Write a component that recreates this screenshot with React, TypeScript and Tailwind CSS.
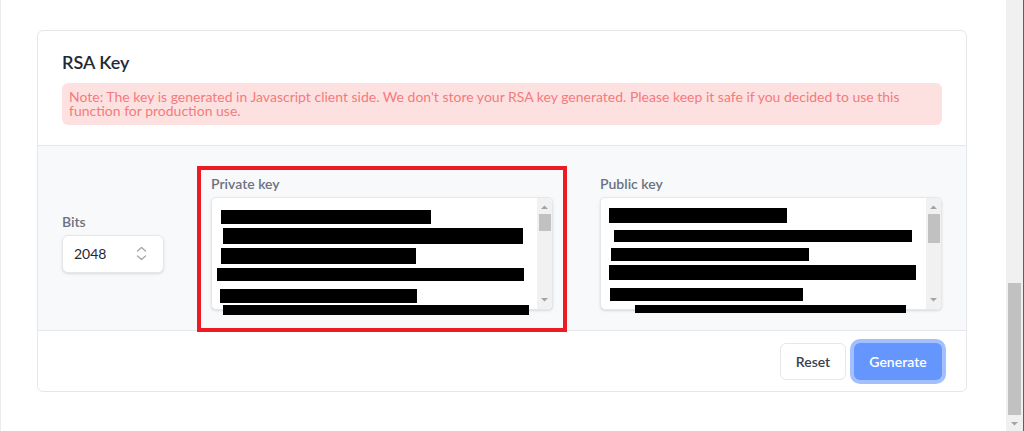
import React from "react";

type Bar = { l: number; t: number; w: number; h: number };

const privateBars: Bar[] = [
  { l: 9, t: 12, w: 210, h: 14 },
  { l: 11, t: 30, w: 300, h: 16 },
  { l: 9, t: 50, w: 195, h: 16 },
  { l: 5, t: 70, w: 307, h: 13 },
  { l: 8, t: 91, w: 197, h: 14 },
  { l: 11, t: 107, w: 306, h: 10 },
];

const publicBars: Bar[] = [
  { l: 8, t: 10, w: 178, h: 15 },
  { l: 13, t: 32, w: 298, h: 12 },
  { l: 10, t: 50, w: 198, h: 13 },
  { l: 8, t: 67, w: 307, h: 15 },
  { l: 9, t: 90, w: 193, h: 13 },
  { l: 34, t: 107, w: 271, h: 8 },
];

function FakeTextarea({ bars, thumbH }: { bars: Bar[]; thumbH: number }) {
  return (
    <div className="relative h-[113px] rounded-[5px] border border-[#e5e7eb] bg-white shadow-sm">
      <div className="absolute right-0 top-0 bottom-0 flex w-[15px] flex-col items-center rounded-r-[5px] bg-[#f1f1f1]">
        <svg width="9" height="6" viewBox="0 0 9 6" className="mt-[6px]">
          <path d="M4.5 1.5 L8 5 L1 5 Z" fill="#a3a3a3" />
        </svg>
        <div className="mt-[4px] w-[12px] bg-[#c1c1c1]" style={{ height: thumbH }} />
        <div className="flex-1" />
        <svg width="9" height="6" viewBox="0 0 9 6" className="mb-[6px]">
          <path d="M1 1 L8 1 L4.5 4.5 Z" fill="#a3a3a3" />
        </svg>
      </div>
      {bars.map((b, i) => (
        <div
          key={i}
          className="absolute bg-black"
          style={{ left: b.l, top: b.t, width: b.w, height: b.h }}
        />
      ))}
    </div>
  );
}

export default function App() {
  return (
    <div className="relative h-[431px] w-[1024px] overflow-hidden bg-white font-['Lato',sans-serif]">
      <div className="flex h-full">
        <div className="w-[1006px] border-l border-[#ececec] pl-[36px] pr-[39px] pt-[30px]">
          <div className="overflow-hidden rounded-md border border-[#e5e7eb] bg-white">
            {/* Header */}
            <div className="px-6 pb-[20px] pt-[17px]">
              <h2 className="text-[18px] font-semibold leading-[28px] text-[#1f2937]">RSA Key</h2>
              <div className="mt-[7px] rounded-md bg-[#fde1e1] px-[7px] py-[7px] text-[14px] leading-[14px] text-[#f47b7b]">
                Note: The key is generated in Javascript client side. We don't store your RSA key generated. Please keep it safe if you decided to use this function for production use.
              </div>
            </div>
            {/* Body */}
            <div className="grid grid-cols-[102px_1fr_1fr] items-center gap-x-[47px] border-y border-[#e5e7eb] bg-[#f8f9fb] px-6 pb-[20px] pt-[28px]">
              <div>
                <div className="mb-[3px] text-[14px] font-semibold leading-[20px] text-[#6b7280]">Bits</div>
                <div className="flex h-[38px] items-center justify-between rounded-md border border-[#e5e7eb] bg-white pl-[11px] pr-[16px] shadow-sm">
                  <span className="text-[14px] text-[#1f2937]">2048</span>
                  <svg width="11" height="15" viewBox="0 0 11 15" fill="none" stroke="#a3a8b3" strokeWidth="1.4" strokeLinecap="round" strokeLinejoin="round">
                    <path d="M1.5 5 L5.5 1.5 L9.5 5" />
                    <path d="M1.5 10 L5.5 13.5 L9.5 10" />
                  </svg>
                </div>
              </div>
              <div>
                <div className="mb-[3px] text-[14px] font-semibold leading-[20px] text-[#6b7280]">Private key</div>
                <FakeTextarea bars={privateBars} thumbH={17} />
              </div>
              <div>
                <div className="mb-[3px] text-[14px] font-semibold leading-[20px] text-[#6b7280]">Public key</div>
                <FakeTextarea bars={publicBars} thumbH={29} />
              </div>
            </div>
            {/* Footer */}
            <div className="flex justify-end gap-2 px-6 pb-[11px] pt-[12px]">
              <button className="flex h-[37px] w-[66px] items-center justify-center rounded-md border border-[#e5e7eb] bg-white text-[14px] font-semibold text-[#374151]">
                Reset
              </button>
              <button className="flex h-[37px] w-[88px] items-center justify-center rounded-md bg-[#6596fd] text-[14px] font-semibold text-white ring-4 ring-[#a2c0fe]">
                Generate
              </button>
            </div>
          </div>
        </div>
        {/* page scrollbar */}
        <div className="flex w-[17px] flex-col items-center bg-[#f0f0f0] pt-[283px]">
          <div className="h-[132px] w-[13px] bg-[#c1c1c1]" />
          <svg width="9" height="6" viewBox="0 0 9 6" className="mt-[6px]">
            <path d="M1 1 L8 1 L4.5 4.5 Z" fill="#a3a3a3" />
          </svg>
        </div>
        <div className="w-px bg-[#56645a]" />
      </div>
      {/* annotation */}
      <div className="absolute left-[197px] top-[166px] h-[166px] w-[370px] border-4 border-[#ed1c24]" />
    </div>
  );
}
